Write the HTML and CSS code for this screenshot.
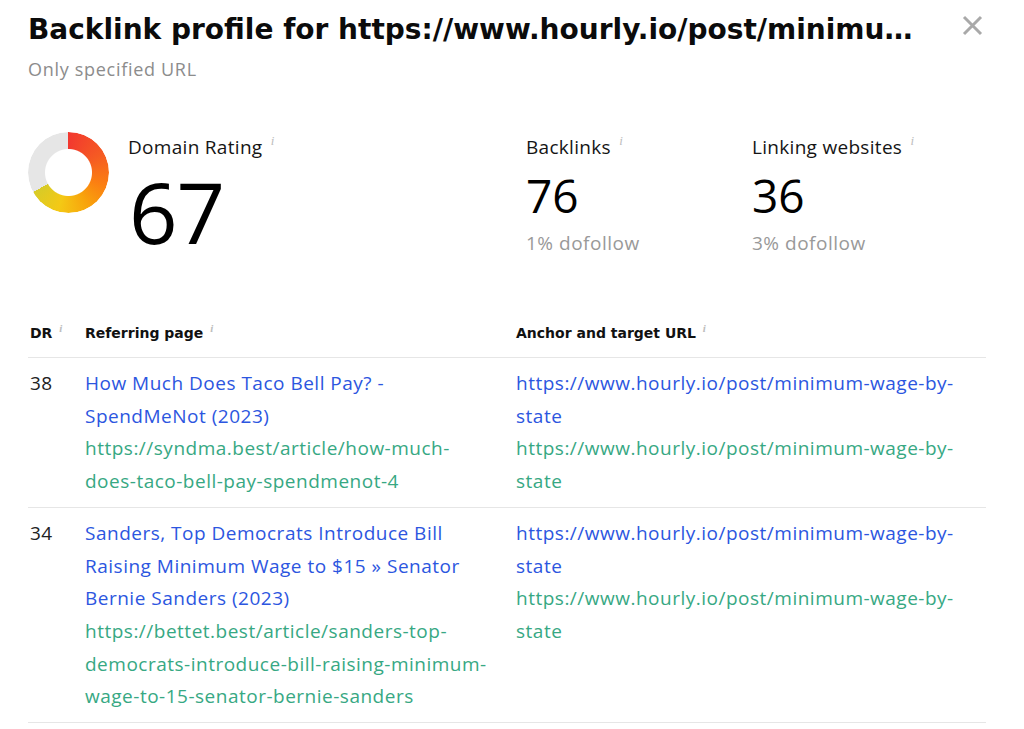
FILE: index.html
```html
<!DOCTYPE html>
<html lang="en">
<head>
<meta charset="utf-8">
<title>Backlink profile</title>
<link rel="stylesheet" href="styles.css">
</head>
<body>
<div class="panel">
  <header class="head">
    <div class="head-text">
      <h1 class="title" title="Backlink profile for https://www.hourly.io/post/minimum-wage-by-state">Backlink profile for https://www.hourly.io/post/minimu…</h1>
      <div class="subtitle">Only specified URL</div>
    </div>
    <button class="close" aria-label="Close">
      <svg width="21" height="21" viewBox="0 0 21 21"><path d="M2 2 L19 19 M19 2 L2 19" stroke="#a9a9a9" stroke-width="3" fill="none"/></svg>
    </button>
  </header>

  <section class="stats">
    <div class="stat stat-dr">
      <div class="donut"></div>
      <div class="stat-body">
        <div class="stat-label">Domain Rating <span class="info">i</span></div>
        <div class="dr-value">67</div>
      </div>
    </div>
    <div class="stat stat-bl">
      <div class="stat-body">
        <div class="stat-label">Backlinks <span class="info">i</span></div>
        <div class="stat-value">76</div>
        <div class="stat-sub">1% dofollow</div>
      </div>
    </div>
    <div class="stat stat-lw">
      <div class="stat-body">
        <div class="stat-label">Linking websites <span class="info">i</span></div>
        <div class="stat-value">36</div>
        <div class="stat-sub">3% dofollow</div>
      </div>
    </div>
  </section>

  <section class="table">
    <div class="row row-head">
      <div class="th">DR <span class="info small">i</span></div>
      <div class="th">Referring page <span class="info small">i</span></div>
      <div class="th">Anchor and target URL <span class="info small">i</span></div>
    </div>
    <div class="row">
      <div class="cell dr">38</div>
      <div class="cell">
        <a class="link-title" href="#">How Much Does Taco Bell Pay? - SpendMeNot (2023)</a>
        <a class="link-url" href="#">https://syndma.best/article/how-much-does-taco-bell-pay-spendmenot-4</a>
      </div>
      <div class="cell">
        <a class="link-title" href="#">https://www.hourly.io/post/minimum-wage-by-state</a>
        <a class="link-url" href="#">https://www.hourly.io/post/minimum-wage-by-state</a>
      </div>
    </div>
    <div class="row">
      <div class="cell dr">34</div>
      <div class="cell">
        <a class="link-title" href="#">Sanders, Top Democrats Introduce Bill Raising Minimum Wage to $15 » Senator Bernie Sanders (2023)</a>
        <a class="link-url" href="#">https://bettet.best/article/sanders-top-democrats-introduce-bill-raising-minimum-wage-to-15-senator-bernie-sanders</a>
      </div>
      <div class="cell">
        <a class="link-title" href="#">https://www.hourly.io/post/minimum-wage-by-state</a>
        <a class="link-url" href="#">https://www.hourly.io/post/minimum-wage-by-state</a>
      </div>
    </div>
  </section>
</div>
</body>
</html>
```

FILE: styles.css
```css
* { box-sizing: border-box; }
html, body { margin: 0; padding: 0; background: #fff; }
body {
  font-family: "Open Sans", "Noto Sans", sans-serif;
  color: #111;
}
.panel {
  width: 1024px;
  padding: 12px 38px 0 28px;
}
.head {
  display: flex;
  align-items: flex-start;
  gap: 30px;
}
.head-text { flex: 1; min-width: 0; }
.title {
  margin: 0;
  font-family: "DejaVu Sans", sans-serif;
  font-weight: 700;
  font-size: 28px;
  line-height: 36px;
  white-space: nowrap;
  overflow: hidden;
  text-overflow: ellipsis;
  color: #0b0b0b;
}
.subtitle {
  margin-top: 9px;
  font-size: 18px;
  line-height: 24px;
  letter-spacing: 0.7px;
  color: #8c8c8c;
}
.close {
  border: 0;
  background: none;
  padding: 0;
  margin-top: 3px;
  margin-right: 3px;
  width: 21px;
  height: 21px;
  cursor: pointer;
}
.close svg { display: block; }

.stats {
  display: flex;
  margin-top: 45px;
  height: 190px;
}
.stat { display: flex; }
.stat-dr { width: 498px; gap: 19px; }
.stat-bl { width: 226px; }
.donut {
  width: 81px;
  height: 81px;
  margin-top: 6px;
  border-radius: 50%;
  background: conic-gradient(#f2382f 0deg, #f55a23 60deg, #fb7f12 110deg, #f8a40c 150deg, #f4c915 195deg, #d8cb27 241deg, #e6e6e6 241deg 360deg);
  -webkit-mask: radial-gradient(circle, transparent 23px, #000 24px);
  mask: radial-gradient(circle, transparent 23px, #000 24px);
  flex: none;
}
.stat-label {
  font-size: 19px;
  line-height: 30px;
  letter-spacing: 0.3px;
  color: #151515;
}
.info {
  font-family: "Liberation Serif", serif;
  font-style: italic;
  font-size: 13px;
  letter-spacing: 0;
  color: #bdbdbd;
  vertical-align: 9px;
  margin-left: 3px;
}
.info.small { font-size: 11px; vertical-align: 6px; margin-left: 2px; }
.dr-value {
  font-size: 85px;
  line-height: 66px;
  margin-top: 16px;
  margin-left: 1px;
  color: #000;
  letter-spacing: -1px;
}
.stat-value {
  font-size: 46px;
  line-height: 56px;
  margin-top: 5px;
  color: #000;
}
.stat-sub {
  font-size: 19px;
  line-height: 28px;
  letter-spacing: 0.5px;
  color: #999;
  margin-top: 6px;
}

.table { display: flex; flex-direction: column; }
.row {
  display: grid;
  grid-template-columns: 57px 431px 1fr;
  border-bottom: 1px solid #e6e6e6;
  padding: 9px 0 9px;
}
.row-head { padding: 0 0 12px; }
.th {
  font-family: "DejaVu Sans", sans-serif;
  font-weight: 700;
  font-size: 14px;
  line-height: 24px;
  color: #111;
}
.th:first-child { padding-left: 2px; }
.cell {
  font-size: 19px;
  line-height: 32.7px;
  letter-spacing: 0.5px;
  display: flex;
  flex-direction: column;
  padding-right: 28px;
}
.cell:last-child { padding-right: 0; max-width: 450px; }
.cell.dr { padding-left: 2px; color: #222; }
.link-title { color: #2c56e0; text-decoration: none; }
.link-url { color: #37a883; text-decoration: none; }
```
